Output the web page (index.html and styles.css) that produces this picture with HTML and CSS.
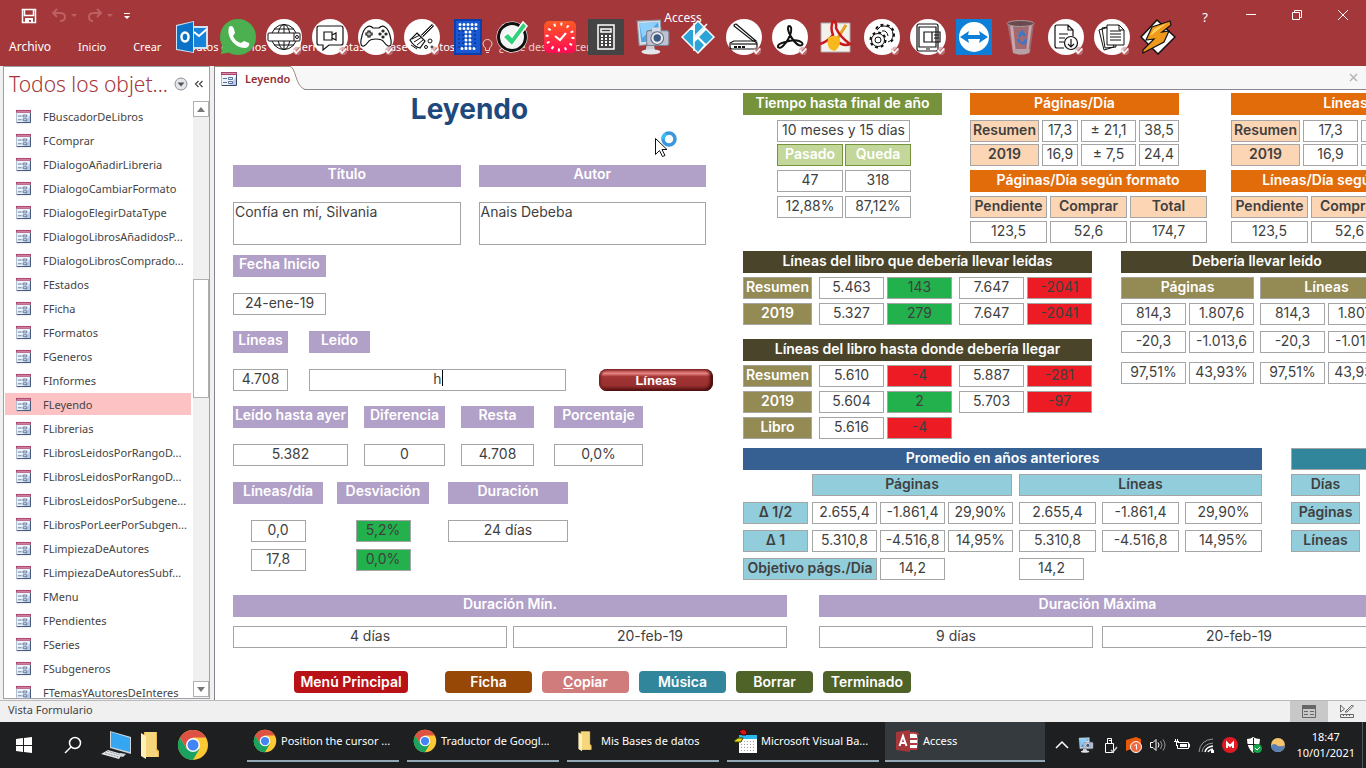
FILE: index.html
```html
<!DOCTYPE html>
<html lang="es">
<head>
    <meta charset="UTF-8">
    <meta name="viewport" content="width=device-width, initial-scale=1.0">
    <title>Access</title>
    <link rel="stylesheet" href="styles.css">
</head>
<body>
    <!-- Shared icons -->
    <svg class="defs" aria-hidden="true">
        <symbol id="i-form" viewBox="0 0 16 16">
            <path fill="#eef3fa" d="M.5 1h15v14H.5z"/>
            <path fill="#b9cbe4" d="M8 15h7V6z"/>
            <path fill="#a8466f" d="M0 1h16v3H0z"/>
            <path fill="#d88aa8" d="M1 2h14v1H1z"/>
            <path fill="none" stroke="#a9b7cc" d="M.5 4v11"/>
            <path fill="none" stroke="#34466b" d="M15.500 4v10.500H1"/>
            <path fill="none" stroke="#5b74a3" d="M2 7.500h4M2 11.500h4M7.500 6.500h4v2h-4zM7.500 10.500h4v2h-4z"/>
        </symbol>
        <symbol id="i-chrome" viewBox="0 0 32 32">
            <circle cx="16" cy="16" r="15" fill="#fcc934"/>
            <path fill="#de5246" d="M16 1a15 15 0 0 1 13 7.500H16L9.500 19.800 3 8.500A15 15 0 0 1 16 1z"/>
            <path fill="#1aa260" d="M3 8.500 9.500 19.800 22.500 19.800 16 31A15 15 0 0 1 3 8.500z"/>
            <circle cx="16" cy="16" r="7" fill="#fff"/>
            <circle cx="16" cy="16" r="5.500" fill="#4285f4"/>
        </symbol>
        <symbol id="i-folder" viewBox="0 0 20 30">
            <path fill="#e8b84e" d="M4 2h13v17l2 2v6H4z"/>
            <path fill="#f6d67c" d="M5 2h11v18l2 2v5H5z"/>
            <path fill="#fff0b8" d="M1 3l5 3v23l-5-3z"/>
        </symbol>
        <symbol id="i-tick" viewBox="0 0 12 12">
            <circle cx="6" cy="6" r="5" fill="#c98c90" opacity=".6"/>
            <path fill="none" stroke="#fff" stroke-width="2" d="M2 5l3 3.500L10 3"/>
        </symbol>
        <symbol id="i-shot" viewBox="0 0 32 34">
            <path fill="#d9dee4" stroke="#8a939d" d="M1 2l22-1 1 22-21 2z"/>
            <path fill="#4ba6e8" d="M3 4l18-1 1 17-17 2z"/>
            <path fill="#8fd0fa" d="M3 4l18-1-15 15z"/>
            <path fill="#c9ced5" d="M10 25h7l1 5H9z"/>
            <ellipse cx="14" cy="31" rx="9" ry="2.500" fill="#e3e6ea"/>
            <rect x="10" y="11" width="21" height="14" rx="2" fill="#bcc2d0" stroke="#7c8296"/>
            <path fill="#d5d9e2" d="M15 8h8v4h-8z"/>
            <circle cx="20" cy="18" r="6" fill="#e9ebf0" stroke="#666b7c"/>
            <circle cx="20" cy="18" r="3.500" fill="#3d5b80"/>
        </symbol>
    </svg>

    <header class="ribbon">
        <div class="titlebar">
            <div class="quick">
                <button aria-label="Guardar"><svg width="16" height="16" viewBox="0 0 16 16"><path fill="none" stroke="#fff" stroke-width="1.500" d="M1.500 1.500h13v13h-13zM3.500 2v5.500h9V2"/><path fill="#fff" d="M4 10h8v5h-2v-3H8v3H4z"/></svg></button>
                <button class="faded" aria-label="Deshacer"><svg width="26" height="16" viewBox="0 0 26 16"><path fill="none" stroke="#d07a7d" stroke-width="2" d="M6 1L2 5l4 4M2 5h7q5 0 5 4t-5 4"/><path fill="#d07a7d" d="M20 6h6l-3 3z"/></svg></button>
                <button class="faded" aria-label="Rehacer"><svg width="26" height="16" viewBox="0 0 26 16"><path fill="none" stroke="#d07a7d" stroke-width="2" d="M10 1l4 4-4 4M14 5H7q-5 0-5 4t4 4"/><path fill="#d07a7d" d="M20 6h6l-3 3z"/></svg></button>
                <button aria-label="Personalizar"><svg width="8" height="8" viewBox="0 0 8 8"><path fill="#fff" d="M1 1h6v1H1zM1 4h6L4 7z"/></svg></button>
            </div>
            <h1 class="app-name">Access</h1>
            <div class="window-buttons">
                <button aria-label="Ayuda">?</button>
                <button aria-label="Minimizar"><svg width="12" height="12" viewBox="0 0 12 12"><path stroke="#fff" d="M1 4.500h10"/></svg></button>
                <button aria-label="Restaurar"><svg width="12" height="12" viewBox="0 0 12 12"><path fill="none" stroke="#fff" d="M1.500 2.500h7v7h-7zM3.500 2V.5h7v7H9"/></svg></button>
                <button aria-label="Cerrar"><svg width="12" height="12" viewBox="0 0 12 12"><path stroke="#fff" d="M1 0l10 10M11 0L1 10"/></svg></button>
            </div>
        </div>
        <nav class="menu">
            <a href="#" class="file">Archivo</a>
            <a href="#">Inicio</a>
            <a href="#">Crear</a>
            <a href="#">Datos externos</a>
            <a href="#">Herramientas de base de datos</a>
            <a href="#" class="tell"><svg width="11" height="16" viewBox="0 0 11 16"><path fill="none" stroke="#ecc" d="M3.500 11.500V9Q1 7 1 5a4.500 4.500 0 0 1 9 0q0 2-2.500 4v2.500zM4 13.500h3"/></svg>¿Qué desea hacer?</a>
        </nav>

        <!-- Floating launcher over the ribbon -->
        <div class="dock">
            <svg viewBox="0 0 36 36"><path fill="#cfe3f3" d="M2 6l18-4v5h14v23H20v4L2 31z"/><path fill="#0a72c6" d="M3 7l16-4v30L3 30z"/><path fill="#1683d8" d="M20 9h12v19H20z"/><path fill="none" stroke="#fff" stroke-width="2" d="M20 13l5 4 8-7"/><ellipse cx="11" cy="18" rx="3.500" ry="4.500" fill="none" stroke="#fff" stroke-width="2.500"/></svg>
            <svg viewBox="0 0 36 36"><circle cx="18" cy="18" r="18" fill="#4caf50"/><path fill="#4caf50" d="M1 35l2-10 9 8z"/><path fill="#fff" d="M9 8c2-2 4-1 5 2l1 4-2 3c2 4 4 6 8 7l3-2 5 2c1 2-1 5-4 5C15 29 6 18 9 8z"/></svg>
            <svg viewBox="0 0 36 36"><circle cx="18" cy="18" r="18" fill="#fff"/><g fill="none" stroke="#111"><circle cx="18" cy="18" r="12.500"/><ellipse cx="18" cy="18" rx="6" ry="12.500"/><path d="M18 5v26M8 10h20M8 26h20"/><rect x="2" y="14" width="32" height="8" rx="1" fill="#fff"/><path d="M28 14v8"/></g><circle cx="31" cy="18" r="1.500" fill="none" stroke="#111"/><use href="#i-tick" x="26" y="27" width="10" height="10"/></svg>
            <svg viewBox="0 0 36 36"><circle cx="18" cy="18" r="18" fill="#fff"/><g fill="none" stroke="#111" stroke-width="1.200"><path d="M7 7h22q2 0 2 2v15q0 2-2 2H17l-6 5v-5H7q-2 0-2-2V9q0-2 2-2z"/><path d="M12 13h8v8h-8zM20 16l4-2v7l-4-2"/></g><use href="#i-tick" x="26" y="27" width="10" height="10"/></svg>
            <svg viewBox="0 0 36 36"><circle cx="18" cy="18" r="18" fill="#fff"/><g fill="none" stroke="#111" stroke-width="1.200"><path d="M9 8q3-2 6 1h6q3-3 6-1 4 2 6 13 1 7-3 6-2-1-5-5-2-2-7-2t-7 2q-3 4-5 5-4 1-3-6Q5 10 9 8z"/><path d="M10 12h2v2h2v2h-2v2h-2v-2H8v-2h2z"/><circle cx="25" cy="12" r="1"/><circle cx="25" cy="18" r="1"/><circle cx="22" cy="15" r="1"/><circle cx="28" cy="15" r="1"/></g><use href="#i-tick" x="26" y="27" width="10" height="10"/></svg>
            <svg viewBox="0 0 36 36"><circle cx="18" cy="18" r="18" fill="#fff"/><path fill="none" stroke="#111" stroke-width="3" d="M29 6L18 17"/><path stroke="#fff" stroke-width="1" d="M28.500 6.500L18 17"/><path fill="#fff" stroke="#111" stroke-width="1.200" d="M13 14l8 8-5 7q-6-1-10-8z"/><path stroke="#111" d="M8 20l8-4M10 23l8-5M13 26l6-5M7 26l6 4"/><g fill="none" stroke="#111"><circle cx="26" cy="22" r="2"/><circle cx="22" cy="28" r="1.500"/><circle cx="28" cy="28" r="1"/></g><use href="#i-tick" x="26" y="27" width="10" height="10"/></svg>
            <svg viewBox="0 0 36 36"><path fill="#0c3fae" d="M4 0h28v36H4z"/><path fill="#1858d2" d="M6 2h24v32H6z"/><path stroke="#0b368f" stroke-width="1.500" stroke-dasharray="2 2" d="M8 12h20M8 16h20M8 20h20M8 24h20M8 28h20"/><path fill="none" stroke="#fff" stroke-width="3" stroke-linecap="round" stroke-dasharray="0 4" d="M10 5.500h17M10 9.500h17M16 13v17M20 13v17M12 29.500h13"/></svg>
            <svg viewBox="0 0 36 36"><circle cx="16" cy="18" r="15.500" fill="#fff"/><circle cx="16" cy="18" r="13.500" fill="#f4f4f4" stroke="#111" stroke-width="3"/><path fill="#31d07b" stroke="#fff" stroke-width="1.500" d="M7 18l5-4 4 4L27 3l4 4-15 20z"/></svg>
            <svg viewBox="0 0 36 36"><defs><linearGradient id="g-clock" x2="0" y2="1"><stop stop-color="#ff5a24"/><stop offset="1" stop-color="#ff0a55"/></linearGradient></defs><rect x="2" y="2" width="32" height="32" rx="5" fill="url(#g-clock)"/><circle cx="18" cy="18" r="13" fill="none" stroke="#fff" stroke-width="3" stroke-dasharray="2 4.807"/><path fill="none" stroke="#fff" stroke-width="2" d="M13 17l5 4 6-7"/></svg>
            <svg viewBox="0 0 36 36"><path fill="#444" d="M0 0h36v36H0z"/><path fill="none" stroke="#fff" stroke-width="1.500" d="M10 6h16v24H10zM13 10h10v3H13z"/><path stroke="#fff" stroke-width="2" stroke-dasharray="2 2" d="M13 17h10M13 20h10M13 23h10M13 26h10"/></svg>
            <svg viewBox="0 0 36 36"><use href="#i-shot" x="2" y="0" width="34" height="36"/></svg>
            <svg viewBox="0 0 36 36"><path fill="#fff" d="M18 1l17 17-17 17L1 18z"/><path fill="#2da4d8" d="M18 3l6 6-9 9V6zM26 11l7 7-7 7-7-7zM18 20l6 6-6 7-7-7zM3 18l7-7h3v17z"/><path stroke="#fff" stroke-width="1.500" d="M14 4v28M14 18L27 5"/></svg>
            <svg viewBox="0 0 36 36"><circle cx="18" cy="18" r="18" fill="#fff"/><g fill="none" stroke="#111" stroke-width="1.200"><path d="M10 5l20 17h-3L8 7q0-2 2-2z"/><path d="M8 22l-4 2v4q0 2 2 2h23q2 0 2-2v-4l-3-2z"/><path d="M5 25h26"/></g><path stroke="#111" stroke-width="2" stroke-dasharray="3 1" d="M8 28h12"/><use href="#i-tick" x="26" y="27" width="10" height="10"/></svg>
            <svg viewBox="0 0 36 36"><circle cx="18" cy="18" r="18" fill="#fff"/><path fill="none" stroke="#111" stroke-width="2" d="M17 7q3 0 2 6-2 8-8 14-3 3-5 1-1-3 7-5 9-3 14-1 5 2 3 4-3 2-8-4-5-6-6-12 0-3 1-3z"/><use href="#i-tick" x="26" y="27" width="10" height="10"/></svg>
            <svg viewBox="0 0 36 36"><path fill="#f3f1ec" stroke="#aaa" d="M3 4h29v29H3z"/><path fill="none" stroke="#e0a21c" stroke-width="3" d="M28 6L18 22"/><path fill="none" stroke="#c8171d" stroke-width="2.500" d="M15 2q-3 7 0 14-6 7-13 9M15 2q4 1 3 7 4 9 14 16-7 3-14-4"/><path fill="#f9b91d" d="M10 19q7-5 12 1 1 7-5 12-9-1-7-13z"/></svg>
            <svg viewBox="0 0 36 36"><circle cx="18" cy="18" r="18" fill="#fff"/><g fill="none" stroke="#111"><circle cx="14" cy="21" r="3"/><circle cx="14" cy="21" r="6.500"/><circle cx="14" cy="21" r="7.500" stroke-width="2" stroke-dasharray="2.900 2.990"/><path d="M13 11q3-5 8-4 8 1 8 9 0 5-5 7M18 12q5-1 6 5"/><path stroke-width="2" stroke-dasharray="3 3" d="M12 10q3-5 9-4 9 1 9 10 0 5-5 8"/></g><use href="#i-tick" x="26" y="27" width="10" height="10"/></svg>
            <svg viewBox="0 0 36 36"><circle cx="18" cy="18" r="18" fill="#fff"/><g fill="none" stroke="#111" stroke-width="1.200"><rect x="7" y="5" width="21" height="27" rx="2"/><path d="M9 8h17v20H9zM14 13h16v10H14zM22 13v10M16 30h4"/><path d="M24 16h5M24 19h5"/></g><use href="#i-tick" x="26" y="27" width="10" height="10"/></svg>
            <svg viewBox="0 0 36 36"><path fill="#0d7fd8" d="M0 0h36v36H0z"/><circle cx="18" cy="18" r="15" fill="#fff"/><path fill="#0d7fd8" d="M4 18l9-6-1 4h12l-1-4 9 6-9 6 1-4H12l1 4z"/></svg>
            <svg viewBox="0 0 36 36"><path fill="#a06a72" d="M5 4h27l-4 30q-9 3-17 0z"/><path fill="#c9a4aa" d="M8 6h3l3 28h-3zM27 6h3l-4 28h-2z"/><path fill="#b9a0a4" d="M11 30h17l-1 4q-8 3-16 0z"/><ellipse cx="18.500" cy="4.500" rx="13.500" ry="3" fill="#6a4a50" stroke="#a99"/><path fill="none" stroke="#3579cf" stroke-width="2.500" d="M17 18l3-5 3 4M24 20l-1 4h-4M18 24l-2-4"/></svg>
            <svg viewBox="0 0 36 36"><circle cx="18" cy="18" r="18" fill="#fff"/><g fill="none" stroke="#111" stroke-width="1.200"><path d="M16 29H9q-2 0-2-2V8q0-2 2-2h11l5 5v6M20 6v5h5M11 15h9M11 19h6M11 23h5"/><circle cx="23" cy="24" r="6.500"/><path d="M23 20v8M20 25l3 3 3-3"/></g><use href="#i-tick" x="26" y="27" width="10" height="10"/></svg>
            <svg viewBox="0 0 36 36"><circle cx="18" cy="18" r="18" fill="#fff"/><g fill="#fff" stroke="#111"><path d="M5 11l10-3 5 20-10 3zM8 9l11-2 3 21-11 1z"/><path d="M13 6h12l5 5v15H13zM25 6v5h5"/><path d="M16 12h11M16 15h11M16 18h11M16 21h11"/></g><use href="#i-tick" x="26" y="27" width="10" height="10"/></svg>
            <svg viewBox="0 0 36 36"><path fill="#fff" stroke="#111" stroke-width="1.500" d="M17 1l18 17-17 17L1 18z"/><path fill="#ef9a1a" stroke="#111" stroke-width="1.200" d="M30 2L12 8 6 21l8-1L3 31v3l21-11 5-11-7 1 9-7z"/><path fill="#ffcf63" d="M27 4L14 10l-4 7z"/></svg>
        </div>
    </header>

    <main class="workspace">
        <aside class="nav-pane">
            <div class="nav-head">
                <h2>Todos los objet...</h2>
                <button aria-label="Filtrar objetos"><svg width="14" height="14" viewBox="0 0 14 14"><circle cx="7" cy="7" r="6" fill="#e4e6ea" stroke="#8b9098"/><path fill="#555" d="M3.500 5.500h7L7 9.500z"/></svg></button>
                <button aria-label="Contraer"><svg width="10" height="8" viewBox="0 0 10 8"><path fill="none" stroke="#444" stroke-width="1.200" d="M4.500 1l-3 3 3 3M8.500 1l-3 3 3 3"/></svg></button>
            </div>
            <div class="nav-body">
                <ul class="nav-list">
                    <li><a href="#"><svg><use href="#i-form"/></svg>FBuscadorDeLibros</a></li>
                    <li><a href="#"><svg><use href="#i-form"/></svg>FComprar</a></li>
                    <li><a href="#"><svg><use href="#i-form"/></svg>FDialogoAñadirLibreria</a></li>
                    <li><a href="#"><svg><use href="#i-form"/></svg>FDialogoCambiarFormato</a></li>
                    <li><a href="#"><svg><use href="#i-form"/></svg>FDialogoElegirDataType</a></li>
                    <li><a href="#"><svg><use href="#i-form"/></svg>FDialogoLibrosAñadidosP...</a></li>
                    <li><a href="#"><svg><use href="#i-form"/></svg>FDialogoLibrosComprado...</a></li>
                    <li><a href="#"><svg><use href="#i-form"/></svg>FEstados</a></li>
                    <li><a href="#"><svg><use href="#i-form"/></svg>FFicha</a></li>
                    <li><a href="#"><svg><use href="#i-form"/></svg>FFormatos</a></li>
                    <li><a href="#"><svg><use href="#i-form"/></svg>FGeneros</a></li>
                    <li><a href="#"><svg><use href="#i-form"/></svg>FInformes</a></li>
                    <li><a href="#" class="selected"><svg><use href="#i-form"/></svg>FLeyendo</a></li>
                    <li><a href="#"><svg><use href="#i-form"/></svg>FLibrerias</a></li>
                    <li><a href="#"><svg><use href="#i-form"/></svg>FLibrosLeidosPorRangoD...</a></li>
                    <li><a href="#"><svg><use href="#i-form"/></svg>FLibrosLeidosPorRangoD...</a></li>
                    <li><a href="#"><svg><use href="#i-form"/></svg>FLibrosLeidosPorSubgene...</a></li>
                    <li><a href="#"><svg><use href="#i-form"/></svg>FLibrosPorLeerPorSubgen...</a></li>
                    <li><a href="#"><svg><use href="#i-form"/></svg>FLimpiezaDeAutores</a></li>
                    <li><a href="#"><svg><use href="#i-form"/></svg>FLimpiezaDeAutoresSubf...</a></li>
                    <li><a href="#"><svg><use href="#i-form"/></svg>FMenu</a></li>
                    <li><a href="#"><svg><use href="#i-form"/></svg>FPendientes</a></li>
                    <li><a href="#"><svg><use href="#i-form"/></svg>FSeries</a></li>
                    <li><a href="#"><svg><use href="#i-form"/></svg>FSubgeneros</a></li>
                    <li><a href="#"><svg><use href="#i-form"/></svg>FTemasYAutoresDeInteres</a></li>
                </ul>
                <div class="scrollbar">
                    <button aria-label="Subir"><svg width="8" height="5" viewBox="0 0 8 5"><path fill="#777" d="M0 5h8L4 0z"/></svg></button>
                    <div class="track"><div class="thumb"></div></div>
                    <button aria-label="Bajar"><svg width="8" height="5" viewBox="0 0 8 5"><path fill="#777" d="M0 0h8L4 5z"/></svg></button>
                </div>
            </div>
        </aside>

        <section class="document">
            <div class="tabstrip">
                <a href="#" class="tab"><svg class="tab-icon"><use href="#i-form"/></svg>Leyendo</a>
                <svg class="tab-slope" width="20" height="24" viewBox="0 0 20 24"><path fill="#fff" d="M0 1Q3 1 6 11t9 13H0z"/><path fill="none" stroke="#9b8f78" d="M0 .5Q3 .5 6 11t9 12.500"/></svg>
                <button class="tab-close" aria-label="Cerrar"><svg width="9" height="9" viewBox="0 0 9 9"><path stroke="#b5b5b5" stroke-width="1.500" d="M1 1l7 7M8 1L1 8"/></svg></button>
            </div>

            <form class="form">
                <div class="upper">
                    <div class="reading">
                        <h2 class="form-title">Leyendo</h2>
                        <div class="fields book">
                            <div class="field"><label for="titulo">Título</label><textarea id="titulo">Confía en mí, Silvania</textarea></div>
                            <div class="field"><label for="autor">Autor</label><textarea id="autor">Anais Debeba</textarea></div>
                        </div>
                        <div class="fields">
                            <div class="field w93"><label for="fecha">Fecha Inicio</label><input id="fecha" value="24-ene-19"></div>
                        </div>
                        <div class="fields lines">
                            <div class="field w55"><label for="lineas">Líneas</label><input id="lineas" value="4.708"></div>
                            <div class="field read"><label for="leido">Leído</label><div class="caret-box"><input id="leido" value="h"><span class="caret"></span></div></div>
                            <button type="button" class="glossy">Líneas</button>
                        </div>
                        <div class="fields yesterday">
                            <div class="field w115"><label for="ayer">Leído hasta ayer</label><input id="ayer" value="5.382"></div>
                            <div class="field w81"><label for="dif">Diferencia</label><input id="dif" value="0"></div>
                            <div class="field w73"><label for="resta">Resta</label><input id="resta" value="4.708"></div>
                            <div class="field w89"><label for="porc">Porcentaje</label><input id="porc" value="0,0%"></div>
                        </div>
                        <div class="fields pace">
                            <div class="field w90"><label for="ldia">Líneas/día</label><div class="pair"><input id="ldia" value="0,0"><input aria-label="Líneas/día media" value="17,8"></div></div>
                            <div class="field w92"><label for="desv">Desviación</label><div class="pair"><input id="desv" class="good" value="5,2%"><input aria-label="Desviación media" class="good" value="0,0%"></div></div>
                            <div class="field w120"><label for="dura">Duración</label><input id="dura" value="24 días"></div>
                        </div>
                    </div>

                    <div class="stats">
                        <div class="stats-row top">
                            <table class="time">
                                <caption class="green">Tiempo hasta final de año</caption>
                                <tbody>
                                <tr><td class="w133">10 meses y 15 días</td></tr>
                                <tr><th class="lime">Pasado</th><th class="lime">Queda</th></tr>
                                <tr><td>47</td><td>318</td></tr>
                                <tr><td>12,88%</td><td>87,12%</td></tr>
                                </tbody>
                            </table>
                            <div class="orange-block">
                                <table class="day">
                                    <caption class="orange">Páginas/Día</caption>
                                    <tbody>
                                    <tr><th class="w69 peach">Resumen</th><td class="w36">17,3</td><td class="w55">± 21,1</td><td class="w40">38,5</td></tr>
                                    <tr><th class="w69 peach">2019</th><td class="w36">16,9</td><td class="w55">± 7,5</td><td class="w40">24,4</td></tr>
                                    </tbody>
                                </table>
                                <table class="format">
                                    <caption class="orange">Páginas/Día según formato</caption>
                                    <tbody>
                                    <tr><th class="peach">Pendiente</th><th class="peach">Comprar</th><th class="peach">Total</th></tr>
                                    <tr><td>123,5</td><td>52,6</td><td>174,7</td></tr>
                                    </tbody>
                                </table>
                            </div>
                            <div class="orange-block">
                                <table class="day wide">
                                    <caption class="orange">Líneas/Día</caption>
                                    <tbody>
                                    <tr><th class="w69 peach">Resumen</th><td class="w55">17,3</td><td class="w55"></td></tr>
                                    <tr><th class="w69 peach">2019</th><td class="w55">16,9</td><td class="w55"></td></tr>
                                    </tbody>
                                </table>
                                <table class="format">
                                    <caption class="orange">Líneas/Día según formato</caption>
                                    <tbody>
                                    <tr><th class="peach">Pendiente</th><th class="peach">Comprar</th></tr>
                                    <tr><td>123,5</td><td>52,6</td></tr>
                                    </tbody>
                                </table>
                            </div>
                        </div>

                        <div class="stats-row middle">
                            <div class="should">
                                <table class="lines-table">
                                    <caption class="dark">Líneas del libro que debería llevar leídas</caption>
                                    <tbody>
                                    <tr><th class="w69 khaki">Resumen</th><td>5.463</td><td class="good">143</td><td>7.647</td><td class="bad">-2041</td></tr>
                                    <tr><th class="w69 khaki">2019</th><td>5.327</td><td class="good">279</td><td>7.647</td><td class="bad">-2041</td></tr>
                                    </tbody>
                                </table>
                                <table class="lines-table">
                                    <caption class="dark">Líneas del libro hasta donde debería llegar</caption>
                                    <tbody>
                                    <tr><th class="w69 khaki">Resumen</th><td>5.610</td><td class="bad">-4</td><td>5.887</td><td class="bad">-281</td></tr>
                                    <tr><th class="w69 khaki">2019</th><td>5.604</td><td class="good">2</td><td>5.703</td><td class="bad">-97</td></tr>
                                    <tr><th class="w69 khaki">Libro</th><td>5.616</td><td class="bad">-4</td></tr>
                                    </tbody>
                                </table>
                            </div>
                            <table class="read-table">
                                <caption class="dark">Debería llevar leído</caption>
                                <tbody>
                                <tr><th class="w133 khaki">Páginas</th><th class="w133 khaki">Líneas</th></tr>
                                <tr><td>814,3</td><td>1.807,6</td><td>814,3</td><td>1.807,6</td></tr>
                                <tr><td>-20,3</td><td>-1.013,6</td><td>-20,3</td><td>-1.013,6</td></tr>
                                <tr><td>97,51%</td><td>43,93%</td><td>97,51%</td><td>43,93%</td></tr>
                                </tbody>
                            </table>
                        </div>

                        <div class="stats-row average">
                            <table class="avg">
                                <caption class="blue">Promedio en años anteriores</caption>
                                <tbody>
                                <tr><td class="empty"></td><th class="sky" colspan="3">Páginas</th><th class="sky split" colspan="3">Líneas</th></tr>
                                <tr><th class="sky">Δ 1/2</th><td>2.655,4</td><td>-1.861,4</td><td>29,90%</td><td class="split">2.655,4</td><td>-1.861,4</td><td>29,90%</td></tr>
                                <tr><th class="sky">Δ 1</th><td>5.310,8</td><td>-4.516,8</td><td>14,95%</td><td class="split">5.310,8</td><td>-4.516,8</td><td>14,95%</td></tr>
                                <tr><th class="sky" colspan="2">Objetivo págs./Día</th><td>14,2</td><td class="empty"></td><td>14,2</td></tr>
                                </tbody>
                            </table>
                            <table class="days">
                                <caption class="teal"></caption>
                                <tbody>
                                <tr><th class="w69 sky">Días</th></tr>
                                <tr><th class="w69 sky">Páginas</th></tr>
                                <tr><th class="w69 sky">Líneas</th></tr>
                                </tbody>
                            </table>
                        </div>
                    </div>
                </div>

                <div class="durations">
                    <fieldset>
                        <legend>Duración Mín.</legend>
                        <input aria-label="Duración mínima" value="4 días"><input aria-label="Fecha mínima" value="20-feb-19">
                    </fieldset>
                    <fieldset class="max">
                        <legend>Duración Máxima</legend>
                        <input aria-label="Duración máxima" value="9 días"><input aria-label="Fecha máxima" value="20-feb-19">
                    </fieldset>
                </div>

                <div class="actions">
                    <button type="button" class="act red">Menú Principal</button>
                    <button type="button" class="act brown">Ficha</button>
                    <button type="button" class="act rose"><u>C</u>opiar</button>
                    <button type="button" class="act music">Música</button>
                    <button type="button" class="act olive">Borrar</button>
                    <button type="button" class="act olive last">Terminado</button>
                </div>
            </form>
        </section>
    </main>

    <div class="statusbar">
        <span>Vista Formulario</span>
        <div class="views">
            <button class="on" aria-label="Vista Formulario"><svg width="14" height="13" viewBox="0 0 14 13"><path fill="none" stroke="#666" d="M.5.500h13v12H.5z"/><path fill="#666" d="M0 0h14v4H0zM2 6h4v1H2zM2 9h4v1H2zM8 6h4v1H8zM8 9h4v1H8z"/></svg></button>
            <button aria-label="Vista Diseño"><svg width="14" height="13" viewBox="0 0 14 13"><path fill="none" stroke="#666" d="M.5 0v7l4-3-4-4M5 7l7-7 1.500 1L7 7zM.5 9.500h13v3H.5zM3.500 10v1M6.500 10v1M9.500 10v1"/></svg></button>
        </div>
    </div>

    <footer class="taskbar">
        <div class="pinned">
            <button aria-label="Inicio"><svg width="16" height="16" viewBox="0 0 16 16"><path fill="#fff" d="M0 2l7-1v7H0zM8 1l8-1v8H8zM0 9h7v6l-7-1zM8 9h8v7l-8-1z"/></svg></button>
            <button aria-label="Buscar"><svg width="18" height="18" viewBox="0 0 18 18"><circle cx="11" cy="7" r="5.500" fill="none" stroke="#fff" stroke-width="1.500"/><path stroke="#fff" stroke-width="1.500" d="M7 11l-6 6"/></svg></button>
            <button aria-label="Equipo"><svg width="32" height="30" viewBox="0 0 32 30"><path fill="#cfd6dc" d="M10 1l21 6v17L10 18z"/><path fill="#35a6f2" d="M11 2l19 6v14l-19-5z"/><path fill="#e3e7ea" d="M8 20l14 4-3 5L1 24z"/><path stroke="#8d969d" stroke-dasharray="2 1" d="M5 23l14 4M7 21l13 4"/><path fill="#d2d8dc" d="M20 23l6 1-3 3-4-1z"/></svg></button>
            <button aria-label="Explorador"><svg width="20" height="30"><use href="#i-folder"/></svg></button>
            <button aria-label="Chrome"><svg width="32" height="32"><use href="#i-chrome"/></svg></button>
        </div>
        <div class="tasks">
            <button><svg width="24" height="24"><use href="#i-chrome"/></svg><span>Position the cursor ...</span></button>
            <button><svg width="24" height="24"><use href="#i-chrome"/></svg><span>Traductor de Googl...</span></button>
            <button><svg width="24" height="22"><use href="#i-folder"/></svg><span>Mis Bases de datos</span></button>
            <button><svg width="24" height="24" viewBox="0 0 24 24"><path fill="#fff" d="M6 7h18v17H6z"/><path fill="#28b9ee" d="M6 6h18v4H6z"/><path stroke="#999" stroke-dasharray="1 2" d="M8 12.500h15M8 15.500h15M8 18.500h15M8 21.500h15"/><path fill="#d11717" stroke="#400" d="M6 2l5-2 3 3-1 3H9z"/><path fill="#e6dd1e" stroke="#440" d="M1 12l4-3h5l-2 4H2z"/></svg><span>Microsoft Visual Ba...</span></button>
            <button class="active"><svg width="24" height="24" viewBox="0 0 24 24"><path fill="#fff" d="M13 4h9q1 8 0 17h-9z"/><path fill="none" stroke="#b23b40" stroke-width="2" d="M13 4q10-1 10 2M13 10h9M13 15h9M13 20h9"/><path fill="#a4373a" d="M1 3l14-2v22L1 21z"/><path fill="none" stroke="#fff" stroke-width="2" d="M4.500 17L8 7l3.500 10M6 14h4"/></svg><span>Access</span></button>
        </div>
        <div class="tray">
            <svg viewBox="0 0 16 16"><path fill="none" stroke="#fff" stroke-width="1.500" d="M2 11l6-6 6 6"/></svg>
            <svg viewBox="0 0 16 16"><use href="#i-shot"/></svg>
            <svg viewBox="0 0 16 16"><path fill="none" stroke="#fff" d="M3.500 6.500h8v9h-8zM5.500 6V1.500h4V6M7 3.500h2"/><path fill="none" stroke="#ccc" stroke-width="1.500" d="M9 13l2 2 4-5"/></svg>
            <svg viewBox="0 0 16 16"><path fill="#e8590c" d="M0 3l10-3 5 2v10H5L0 14z"/><circle cx="10" cy="10" r="5.500" fill="#f26a42" stroke="#fff"/><path fill="none" stroke="#fff" d="M8.500 8.500l2-1v5"/></svg>
            <svg viewBox="0 0 16 16"><path fill="none" stroke="#fff" d="M.5 5.500H3l3-3v11l-3-3H.5zM8 5.500q2 2.500 0 5"/><path fill="none" stroke="#999" d="M10.500 4q3 4 0 8M13 2.500q4 5.500 0 11"/></svg>
            <svg viewBox="0 0 16 16"><path fill="none" stroke="#fff" d="M3.500 5.500h11v6h-11V8M14.500 7h1v3h-1M0 4.500h5M1.500 2v2M3.500 2v2M2.500 5v4"/><path fill="#fff" d="M6 7h7v3H6z"/></svg>
            <svg viewBox="0 0 16 16"><path fill="none" stroke="#999" d="M1 15Q2 3 15 2M4 15q1-8 11-9"/><path fill="none" stroke="#fff" stroke-width="1.500" d="M7 15q1-5 8-6M10 15q1-2 5-3"/><path fill="#fff" d="M13 13h3v3h-3z"/></svg>
            <svg viewBox="0 0 16 16"><circle cx="8" cy="8" r="8" fill="#e01b24"/><path fill="none" stroke="#fff" stroke-width="2" d="M5 11V6l3 3 3-3v5"/></svg>
            <svg viewBox="0 0 16 16"><path fill="#fff" d="M1 2q4 0 6-2 3 2 7 2 0 9-7 14Q1 11 1 2z"/><path stroke="#222" d="M7.500 1v14M1 7.500h13"/><circle cx="11.500" cy="11.500" r="4.500" fill="#16a34a"/><path fill="none" stroke="#fff" d="M9 11l2 2 3-3"/></svg>
            <svg viewBox="0 0 16 16"><circle cx="8" cy="8" r="7" fill="#f7c46c"/><path fill="#5a7fb4" d="M1 9q3-4 7 0 4 1 7-1-1 7-7 7-6 0-7-6z"/></svg>
        </div>
        <div class="clock"><span>18:47</span><span>10/01/2021</span></div>
    </footer>

    <!-- Busy pointer -->
    <svg class="pointer" width="26" height="32" viewBox="0 0 26 32"><path fill="#fff" stroke="#111" d="M1.500 10.500v16l4-4 3 6 2.500-1-3-6H13z"/><circle cx="15" cy="11" r="6" fill="#fff" stroke="#3a96dd" stroke-width="3.500"/><path fill="none" stroke="#39bdf5" stroke-width="3.500" d="M9 11a6 6 0 0 1 3-5"/></svg>
</body>
</html>
```
FILE: styles.css
```css
* {
    box-sizing: border-box;
}
body {
    margin: 0;
    height: 100vh;
    display: flex;
    flex-direction: column;
    overflow: hidden;
    background: #fff;
    font-family: "Noto Sans", "Open Sans", sans-serif;
    font-size: 12px;
    color: #444;
}
button {
    border: none;
    background: none;
    padding: 0;
    font: inherit;
    color: inherit;
    cursor: pointer;
}
a {
    color: inherit;
    text-decoration: none;
}
.defs {
    position: absolute;
    width: 0;
    height: 0;
}

/* Ribbon */
.ribbon {
    position: relative;
    height: 66px;
    flex-shrink: 0;
    background: #a4373a;
    color: #fff;
}
.titlebar {
    display: grid;
    grid-template-columns: 1fr auto 1fr;
    height: 32px;
}
.quick {
    display: flex;
    align-items: center;
    gap: 10px;
    padding-left: 21px;
    padding-bottom: 2px;
}
.quick button {
    display: flex;
}
.quick .faded {
    opacity: .6;
    margin-left: 4px;
}
.quick .faded + .faded {
    margin-left: 0;
}
.app-name {
    margin: 0;
    padding-top: 2px;
    font-size: 12px;
    font-weight: normal;
    line-height: 32px;
}
.window-buttons {
    display: flex;
    justify-content: flex-end;
}
.window-buttons button {
    width: 46px;
    font-size: 13px;
}
.menu {
    display: flex;
    gap: 27px;
    padding-left: 9px;
    font-size: 11px;
    line-height: 30px;
    white-space: nowrap;
}
.menu .file {
    font-size: 12px;
}
.menu .tell {
    display: flex;
    align-items: center;
    gap: 6px;
    color: #ecc;
}
.dock {
    position: absolute;
    top: 19px;
    left: 174px;
    display: flex;
    gap: 10px;
}
.dock svg {
    width: 36px;
    height: 36px;
}

/* Navigation pane */
.workspace {
    flex: 1;
    min-height: 0;
    display: flex;
    background: #f0f0f0;
}
.nav-pane {
    width: 207px;
    flex-shrink: 0;
    display: flex;
    flex-direction: column;
    margin: 0 4px 1px 3px;
    background: #fff;
    border: 1px solid #a0a0a8;
}
.nav-head {
    display: flex;
    align-items: center;
    height: 34px;
    padding: 0 5px;
}
.nav-head h2 {
    flex: 1;
    margin: 0;
    font-size: 21px;
    font-weight: 300;
    color: #a4373a;
    white-space: nowrap;
}
.nav-head button {
    display: flex;
    margin-left: 6px;
}
.nav-body {
    flex: 1;
    min-height: 0;
    display: flex;
}
.nav-list {
    flex: 1;
    min-width: 0;
    margin: 0;
    padding: 4px 2px 0 1px;
    list-style: none;
    overflow: hidden;
    font-size: 11px;
}
.nav-list li {
    height: 24px;
}
.nav-list a {
    display: flex;
    align-items: center;
    gap: 12px;
    height: 22px;
    padding-left: 11px;
    white-space: nowrap;
}
.nav-list svg {
    width: 15px;
    height: 15px;
    flex-shrink: 0;
}
.nav-list .selected {
    background: #fdc3c4;
}
.scrollbar {
    width: 16px;
    display: flex;
    flex-direction: column;
    padding-bottom: 1px;
    background: #f0f0f0;
}
.scrollbar button {
    height: 16px;
    display: flex;
    align-items: center;
    justify-content: center;
    background: #fff;
    border: 1px solid #b0b0b0;
}
.track {
    flex: 1;
    padding-top: 162px;
}
.thumb {
    height: 119px;
    background: #fff;
    border: 1px solid #b0b0b0;
}

/* Document and tab */
.document {
    flex: 1;
    min-width: 0;
    display: flex;
    flex-direction: column;
    overflow: hidden;
    background: #fff;
    border-left: 1px solid #85858f;
}
.tabstrip {
    display: flex;
    height: 24px;
    flex-shrink: 0;
    background: #f7f7f7;
    border-bottom: 1px solid #8b8792;
}
.tab {
    display: flex;
    align-items: center;
    gap: 8px;
    height: 24px;
    padding-left: 6px;
    background: #fff;
    border-top: 1px solid #9b8f78;
    font-size: 11px;
    font-weight: 600;
    color: #943034;
}
.tab-icon {
    width: 16px;
    height: 16px;
}
.tab-close {
    margin-left: auto;
    padding-right: 8px;
}

/* Form */
.form {
    flex: 1;
    display: flex;
    flex-direction: column;
    padding-left: 18px;
    overflow: hidden;
    font-family: Inter, "Noto Sans", sans-serif;
    font-size: 14px;
    color: #3f3f3f;
}
.upper {
    display: flex;
    gap: 30px;
}
.reading {
    width: 480px;
    flex-shrink: 0;
}
.form-title {
    margin: 0 7px 0 0;
    height: 75px;
    padding-top: 2px;
    font-size: 28px;
    line-height: 34px;
    text-align: center;
    color: #1f497d;
}
.fields {
    display: flex;
    margin-bottom: 16px;
}
.field {
    display: flex;
    flex-direction: column;
    gap: 16px;
}
label,
legend {
    height: 22px;
    line-height: 17px;
    background: #b1a0c7;
    color: #fff;
    font-weight: 600;
    text-align: center;
    white-space: nowrap;
}
input,
textarea {
    width: 100%;
    height: 22px;
    margin: 0;
    padding: 0 2px 3px;
    border: 1px solid #a5a5a5;
    border-radius: 0;
    outline: none;
    background: #fff;
    font: inherit;
    color: inherit;
    text-align: center;
}
textarea {
    display: block;
    height: 43px;
    padding: 0 1px;
    line-height: 17px;
    text-align: left;
    resize: none;
}
.book {
    gap: 18px;
    margin-right: 7px;
    margin-bottom: 10px;
}
.book .field {
    flex: 1;
    gap: 15px;
}
.lines {
    gap: 21px;
    margin-bottom: 15px;
}
.read {
    width: 257px;
}
.read label {
    width: 61px;
}
.caret-box {
    position: relative;
    display: flex;
}
.caret {
    position: absolute;
    left: calc(50% + 4px);
    top: 1px;
    width: 1px;
    height: 16px;
    background: #000;
}
.glossy {
    align-self: flex-end;
    width: 114px;
    height: 22px;
    margin-left: auto;
    border-radius: 8px;
    background: linear-gradient(#8c2626, #e88482 20%, #a33434 35%, #983030 75%, #5a1414);
    box-shadow: inset -3px -1px 3px #4a0d0d, inset 2px 0 2px #7c2222;
    color: #fff;
    font-family: "Liberation Sans", sans-serif;
    font-size: 13px;
    font-weight: bold;
}
.yesterday {
    gap: 16px;
}
.yesterday .w89 {
    margin-left: 4px;
}
.pace {
    gap: 14px;
    margin-bottom: 0;
}
.pace .w120 {
    margin-left: 5px;
}
.pair {
    display: flex;
    flex-direction: column;
    gap: 7px;
    width: 55px;
    align-self: center;
}
.w36 { width: 36px; }
.w40 { width: 40px; }
.w55 { width: 55px; }
.w69 { width: 69px; }
.w73 { width: 73px; }
.w81 { width: 81px; }
.w89 { width: 89px; }
.w90 { width: 90px; }
.w92 { width: 92px; }
.w93 { width: 93px; }
.w115 { width: 115px; }
.w120 { width: 120px; }
.w133 { width: 133px; }

/* Statistics tables */
.stats {
    padding-top: 3px;
    white-space: nowrap;
}
.stats table {
    display: block;
}
.stats caption,
.stats tbody {
    display: block;
}
.stats tr {
    display: flex;
    gap: 3px;
    margin-bottom: 4px;
}
.stats th,
.stats td {
    flex-shrink: 0;
    height: 22px;
    padding: 0;
    border: 1px solid #a5a5a5;
    line-height: 17px;
    text-align: center;
}
.stats th {
    font-weight: 600;
}
.stats td {
    background: #fff;
}
caption {
    height: 22px;
    line-height: 19px;
    margin-bottom: 4px;
    color: #fff;
    font-weight: 600;
}
.stats-row {
    display: flex;
}
.time {
    width: 199px;
    margin-right: 28px;
}
.time tbody {
    padding: 1px 0 0 34px;
}
.time tr {
    gap: 2px;
}
.time tr:first-child {
    margin-bottom: 2px;
}
.time td:not(.w133),
.time th {
    width: 66px;
}
.orange-block {
    width: 236px;
    margin-right: 25px;
}
.day {
    width: 209px;
}
.day.wide {
    width: 256px;
}
.day tbody {
    padding-top: 1px;
}
.day tr:first-child {
    margin-bottom: 2px;
}
.format th,
.format td {
    width: 77px;
}
.format tr {
    margin-bottom: 3px;
}
.middle {
    gap: 29px;
    margin-top: 5px;
}
.should {
    width: 349px;
}
.lines-table {
    margin-bottom: 9px;
}
.lines-table + .lines-table {
    margin-top: 14px;
}
.lines-table td,
.read-table td {
    width: 65px;
}
.lines-table th + td,
.lines-table td:nth-child(4) {
    margin-left: 4px;
}
.read-table caption {
    width: 272px;
}
.read-table tr:first-child {
    gap: 6px;
}
.read-table td:nth-child(3) {
    margin-left: 3px;
}
.read-table tr:nth-child(2) {
    margin-bottom: 6px;
}
.read-table tr:nth-child(3) {
    margin-bottom: 9px;
}
.average {
    gap: 29px;
}
.average tr {
    margin-bottom: 6px;
}
.avg {
    width: 519px;
    flex-shrink: 0;
}
.avg tr {
    display: grid;
    grid-template-columns: 66px 65px 65px 68px 80px 80px 77px;
    gap: 0 3px;
}
.avg th,
.avg td {
    width: 65px;
}
.avg .split,
.avg .split ~ td {
    width: 77px;
}
.avg th[colspan="2"] {
    grid-column: span 2;
    width: 134px;
}
.avg th[colspan="3"] {
    grid-column: span 3;
    width: 200px;
}
.avg .split[colspan="3"] {
    width: 243px;
}
.stats .empty {
    border: none;
    background: none;
}
.days caption {
    width: 210px;
}
.green { background: #76933c; }
.lime {
    background: #c4d79b;
    color: #fff;
}
.stats .lime { border-color: #76933c; }
.orange { background: #e26b0a; }
.peach { background: #fcd5b4; }
.dark { background: #4a452a; }
.khaki {
    background: #948a54;
    color: #fff;
}
.blue { background: #366092; }
.sky { background: #92cddc; }
.teal {
    background: #31869b;
    border: 1px solid #a5a5a5;
}
.form .good { background: #22b14c; }
.form .bad { background: #ed1c24; }

/* Durations and buttons */
.durations {
    display: flex;
    gap: 32px;
    margin-top: 9px;
}
fieldset {
    width: 554px;
    flex-shrink: 0;
    margin: 0;
    padding: 9px 0 0;
    border: none;
    display: grid;
    grid-template-columns: 1fr 1fr;
    gap: 6px;
}
.max {
    width: 557px;
    gap: 9px;
}
legend {
    width: 100%;
    padding: 0;
}
.actions {
    display: flex;
    gap: 10px;
    margin-top: 23px;
    padding-left: 61px;
}
.act {
    width: 87px;
    height: 22px;
    padding-bottom: 2px;
    border-radius: 4px;
    color: #fff;
    font-weight: 600;
    white-space: nowrap;
}
.red {
    width: 114px;
    margin-right: 27px;
    background: #b81217;
}
.brown { background: #974806; }
.rose { background: #d17c7c; }
.music { background: #31869b; }
.olive {
    width: 77px;
    background: #4f6228;
}
.last { width: 88px; }

/* Status bar */
.statusbar {
    display: flex;
    justify-content: space-between;
    height: 22px;
    flex-shrink: 0;
    padding-left: 8px;
    background: #f0f0f0;
    border-top: 1px solid #bababa;
    font-size: 11px;
    line-height: 18px;
}
.views {
    display: flex;
    height: 21px;
}
.views button {
    width: 38px;
    display: flex;
    align-items: center;
    justify-content: center;
}
.views .on {
    background: #c8c8c8;
}

/* Taskbar */
.taskbar {
    display: flex;
    height: 46px;
    flex-shrink: 0;
    background: #1d1f21;
    color: #fff;
    font-size: 11px;
}
.pinned {
    display: flex;
    align-items: center;
    padding-left: 16px;
    width: 247px;
    flex-shrink: 0;
}
.pinned button {
    display: flex;
    margin-right: 8px;
}
.pinned button:nth-child(1) {
    margin-right: 32px;
}
.pinned button:nth-child(2) {
    margin-right: 18px;
}
.pinned button:nth-child(4) {
    margin-right: 17px;
}
.tasks {
    display: flex;
    gap: 8px;
    padding-bottom: 6px;
}
.tasks button {
    width: 152px;
    display: flex;
    align-items: center;
    gap: 4px;
    padding: 0 0 1px 6px;
    border-bottom: 2px solid #93a8b5;
    white-space: nowrap;
}
.tasks .active {
    width: 160px;
    margin-left: -2px;
    padding-left: 10px;
    background: #343a3e;
}
.tray {
    display: flex;
    align-items: center;
    gap: 8px;
    margin-left: auto;
}
.tray svg {
    width: 16px;
    height: 16px;
}
.clock {
    display: flex;
    flex-direction: column;
    justify-content: center;
    margin: 0 3px 0 5px;
    padding: 0 7px 0 5px;
    border-right: 1px solid #55585a;
    line-height: 16px;
    text-align: center;
    white-space: nowrap;
}
.pointer {
    position: absolute;
    left: 654px;
    top: 128px;
}
```
